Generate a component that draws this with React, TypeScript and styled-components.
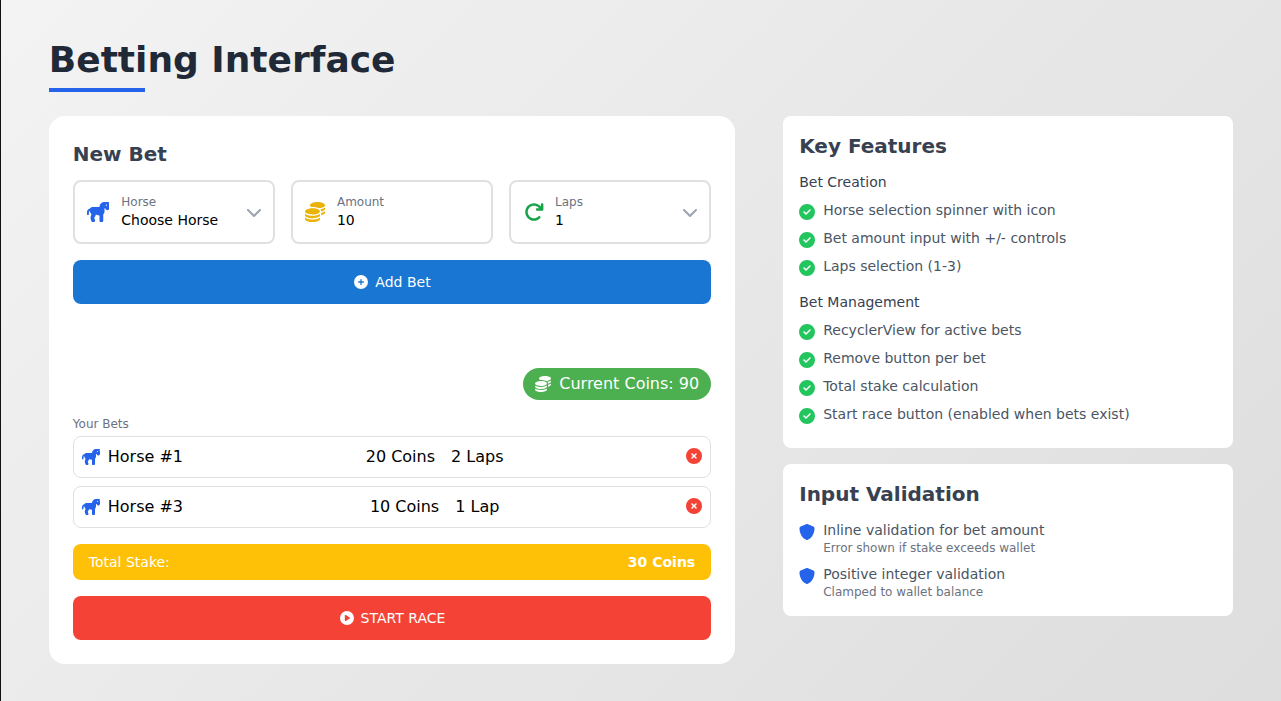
import React from "react";
import styled, { createGlobalStyle } from "styled-components";
import {
  FaHorse,
  FaCoins,
  FaArrowRotateRight,
  FaChevronDown,
  FaCirclePlus,
  FaCirclePlay,
  FaCircleXmark,
  FaCircleCheck,
  FaShield,
} from "react-icons/fa6";

const GlobalStyle = createGlobalStyle`
  *, *::before, *::after { box-sizing: border-box; }
  html { background: #111; }
  body {
    margin: 0;
    height: 701px;
    overflow: hidden;
    font-family: "DejaVu Sans", sans-serif;
    font-size: 16px;
    line-height: 24px;
    color: #000;
  }
  h1, h2, h3, p, ul { margin: 0; padding: 0; }
  ul { list-style: none; }
  button { font-family: inherit; cursor: pointer; }
  svg { display: block; flex-shrink: 0; }
`;

const Page = styled.div`
  width: 1280px;
  height: 720px;
  margin-left: 0.8px;
  padding: 40px 48px;
  background: linear-gradient(135deg, #f3f3f3 0%, #dddddd 100%);
`;

const Title = styled.h1`
  font-size: 36px;
  line-height: 40px;
  font-weight: 700;
  color: #1f2937;
`;

const Underline = styled.div`
  width: 96px;
  height: 4px;
  margin: 8px 0 24px;
  background: #2563eb;
`;

const Columns = styled.main`
  display: flex;
  align-items: flex-start;
`;

const LeftColumn = styled.div`
  width: 60%;
  padding-right: 24px;
`;

const RightColumn = styled.aside`
  width: 40%;
  padding-left: 24px;
  display: flex;
  flex-direction: column;
  gap: 16px;
`;

const BetCard = styled.section`
  padding: 24px;
  border-radius: 16px;
  background: #fff;
`;

const InfoCard = styled.section`
  padding: 16px;
  border-radius: 8px;
  background: #fff;
`;

const Heading = styled.h2`
  margin-bottom: 12px;
  font-size: 20px;
  line-height: 28px;
  font-weight: 700;
  color: #374151;
`;

const Fields = styled.div`
  display: grid;
  grid-template-columns: repeat(3, 1fr);
  gap: 16px;
  margin-bottom: 16px;
`;

const FieldBox = styled.div`
  display: flex;
  align-items: center;
  height: 64px;
  padding: 0 12px;
  border: 2px solid #e0e0e0;
  border-radius: 8px;
`;

const FieldIcon = styled.span<{ $color: string }>`
  margin-right: 12px;
  font-size: 20px;
  color: ${(p) => p.$color};
`;

const FieldText = styled.div`
  flex: 1;
`;

const FieldLabel = styled.div`
  font-size: 12px;
  line-height: 16px;
  color: #6b7280;
`;

const FieldValue = styled.div`
  font-size: 14px;
  line-height: 20px;
`;

const HorseIcon = styled(FaHorse)`
  width: 1.125em;
  height: 1em;
`;

const LapsIcon = styled(FaArrowRotateRight)`
  margin: 0 -1px 0 1px;
`;

const Chevron = styled(FaChevronDown)`
  margin-right: -0.9px;
  color: #9ca3af;
`;

const ActionButton = styled.button<{ $bg: string }>`
  display: flex;
  align-items: center;
  justify-content: center;
  gap: 7px;
  width: 100%;
  height: 44px;
  padding: 0 0 0 1px;
  border: 0;
  border-radius: 8px;
  background: ${(p) => p.$bg};
  color: #fff;
  font-size: 14px;
  line-height: 20px;
`;

const WalletRow = styled.div`
  display: flex;
  justify-content: flex-end;
  margin: 64px 0 16px;
`;

const Wallet = styled.div`
  display: flex;
  align-items: center;
  gap: 8px;
  height: 32px;
  padding: 0 12px;
  border-radius: 16px;
  background: #4caf50;
  color: #fff;
`;

const ListLabel = styled.div`
  margin-bottom: 4px;
  font-size: 12px;
  line-height: 16px;
  color: #6b7280;
`;

const BetList = styled.ul`
  display: flex;
  flex-direction: column;
  gap: 8px;
`;

const BetRow = styled.li`
  display: flex;
  align-items: center;
  justify-content: space-between;
  height: 42px;
  padding: 0 8px;
  border: 1px solid #e0e0e0;
  border-radius: 8px;
`;

const BetHorse = styled.div`
  display: flex;
  align-items: center;
  gap: 8px;

  svg { color: #2563eb; }
`;

const BetDetails = styled.div`
  display: flex;
  gap: 16px;
`;

const RemoveButton = styled.button`
  padding: 0 0 2px;
  border: 0;
  background: none;
  color: #f44336;
  font-size: 16px;
`;

const Total = styled.div`
  display: flex;
  align-items: center;
  justify-content: space-between;
  height: 36px;
  margin: 16px 0;
  padding: 0 16px;
  border-radius: 8px;
  background: #ffc107;
  color: #fff;
  font-size: 14px;
  line-height: 20px;
`;

const GroupTitle = styled.h3`
  font-size: 14px;
  line-height: 20px;
  font-weight: 400;
  color: #374151;
`;

const FeatureList = styled.ul`
  display: flex;
  flex-direction: column;
  gap: 8px;
  padding: 8px 0;

  & + h3 { margin-top: 8px; }
`;

const Item = styled.li<{ $color: string }>`
  display: flex;
  align-items: flex-start;
  gap: 8px;
  font-size: 14px;
  line-height: 20px;
  color: #4b5563;

  svg {
    margin-top: 4px;
    font-size: 16px;
    color: ${(p) => p.$color};
  }
`;

const RuleList = styled.ul`
  display: flex;
  flex-direction: column;
  gap: 8px;
`;

const RuleNote = styled.p`
  font-size: 12px;
  line-height: 16px;
  color: #6b7280;
`;

interface FieldProps {
  icon: React.ReactNode;
  color: string;
  label: string;
  value: string;
  select?: boolean;
}

const Field = ({ icon, color, label, value, select }: FieldProps) => (
  <FieldBox>
    <FieldIcon $color={color}>{icon}</FieldIcon>
    <FieldText>
      <FieldLabel>{label}</FieldLabel>
      <FieldValue>{value}</FieldValue>
    </FieldText>
    {select && <Chevron />}
  </FieldBox>
);

const bets = [
  { horse: "Horse #1", stake: "20 Coins", laps: "2 Laps" },
  { horse: "Horse #3", stake: "10 Coins", laps: "1 Lap" },
];

const features = [
  {
    title: "Bet Creation",
    items: [
      "Horse selection spinner with icon",
      "Bet amount input with +/- controls",
      "Laps selection (1-3)",
    ],
  },
  {
    title: "Bet Management",
    items: [
      "RecyclerView for active bets",
      "Remove button per bet",
      "Total stake calculation",
      "Start race button (enabled when bets exist)",
    ],
  },
];

const rules = [
  { text: "Inline validation for bet amount", note: "Error shown if stake exceeds wallet" },
  { text: "Positive integer validation", note: "Clamped to wallet balance" },
];

export default function App() {
  return (
    <>
      <GlobalStyle />
      <Page>
        <Title>Betting Interface</Title>
        <Underline />
        <Columns>
          <LeftColumn>
            <BetCard>
              <Heading>New Bet</Heading>
              <Fields>
                <Field icon={<HorseIcon />} color="#2563eb" label="Horse" value="Choose Horse" select />
                <Field icon={<FaCoins />} color="#eab308" label="Amount" value="10" />
                <Field icon={<LapsIcon />} color="#16a34a" label="Laps" value="1" select />
              </Fields>
              <ActionButton $bg="#1976d2">
                <FaCirclePlus />
                <span>Add Bet</span>
              </ActionButton>
              <WalletRow>
                <Wallet>
                  <FaCoins />
                  <span>Current Coins: 90</span>
                </Wallet>
              </WalletRow>
              <ListLabel>Your Bets</ListLabel>
              <BetList>
                {bets.map((bet) => (
                  <BetRow key={bet.horse}>
                    <BetHorse>
                      <HorseIcon />
                      <span>{bet.horse}</span>
                    </BetHorse>
                    <BetDetails>
                      <span>{bet.stake}</span>
                      <span>{bet.laps}</span>
                    </BetDetails>
                    <RemoveButton aria-label="Remove bet">
                      <FaCircleXmark />
                    </RemoveButton>
                  </BetRow>
                ))}
              </BetList>
              <Total>
                <span>Total Stake:</span>
                <strong>30 Coins</strong>
              </Total>
              <ActionButton $bg="#f44336">
                <FaCirclePlay />
                <span>START RACE</span>
              </ActionButton>
            </BetCard>
          </LeftColumn>
          <RightColumn>
            <InfoCard>
              <Heading>Key Features</Heading>
              {features.map((group) => (
                <React.Fragment key={group.title}>
                  <GroupTitle>{group.title}</GroupTitle>
                  <FeatureList>
                    {group.items.map((item) => (
                      <Item key={item} $color="#22c55e">
                        <FaCircleCheck />
                        <span>{item}</span>
                      </Item>
                    ))}
                  </FeatureList>
                </React.Fragment>
              ))}
            </InfoCard>
            <InfoCard>
              <Heading>Input Validation</Heading>
              <RuleList>
                {rules.map((rule) => (
                  <Item key={rule.text} $color="#2563eb">
                    <FaShield />
                    <div>
                      <p>{rule.text}</p>
                      <RuleNote>{rule.note}</RuleNote>
                    </div>
                  </Item>
                ))}
              </RuleList>
            </InfoCard>
          </RightColumn>
        </Columns>
      </Page>
    </>
  );
}
